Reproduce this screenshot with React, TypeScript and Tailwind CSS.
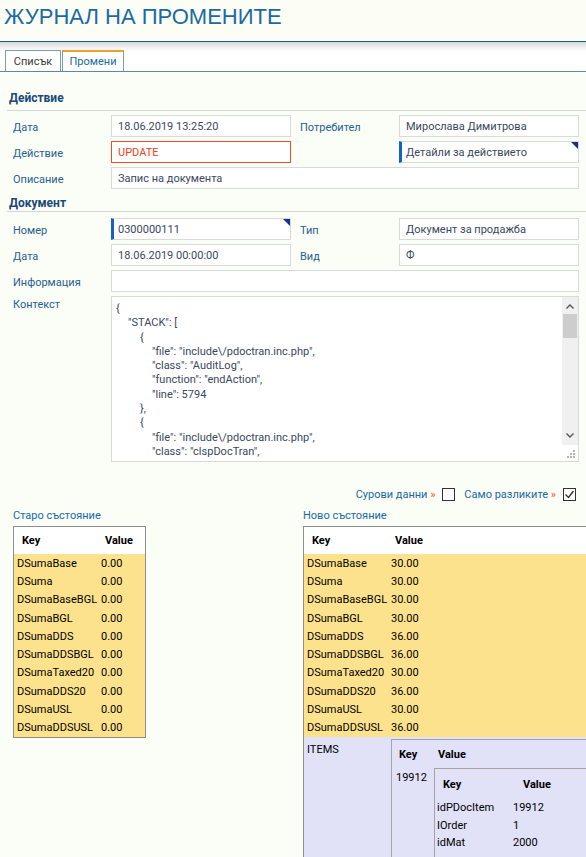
import React from "react";

const oldRows: [string, string][] = [
  ["DSumaBase", "0.00"],
  ["DSuma", "0.00"],
  ["DSumaBaseBGL", "0.00"],
  ["DSumaBGL", "0.00"],
  ["DSumaDDS", "0.00"],
  ["DSumaDDSBGL", "0.00"],
  ["DSumaTaxed20", "0.00"],
  ["DSumaDDS20", "0.00"],
  ["DSumaUSL", "0.00"],
  ["DSumaDDSUSL", "0.00"],
];

const newRows: [string, string][] = [
  ["DSumaBase", "30.00"],
  ["DSuma", "30.00"],
  ["DSumaBaseBGL", "30.00"],
  ["DSumaBGL", "30.00"],
  ["DSumaDDS", "36.00"],
  ["DSumaDDSBGL", "36.00"],
  ["DSumaTaxed20", "30.00"],
  ["DSumaDDS20", "36.00"],
  ["DSumaUSL", "30.00"],
  ["DSumaDDSUSL", "36.00"],
];

const itemRows: [string, string][] = [
  ["idPDocItem", "19912"],
  ["IOrder", "1"],
  ["idMat", "2000"],
];

const indent = ["pl-0", "pl-[12px]", "pl-[24px]", "pl-[36px]"];

const contextLines: [number, string][] = [
  [0, "{"],
  [1, '"STACK": ['],
  [2, "{"],
  [3, '"file": "include\\/pdoctran.inc.php",'],
  [3, '"class": "AuditLog",'],
  [3, '"function": "endAction",'],
  [3, '"line": 5794'],
  [2, "},"],
  [2, "{"],
  [3, '"file": "include\\/pdoctran.inc.php",'],
  [3, '"class": "clspDocTran",'],
];

function Label({ children, right }: { children: React.ReactNode; right?: boolean }) {
  return (
    <div className={`flex items-center pt-[3px] text-[#285f91] ${right ? "pl-[9px]" : "pl-[6px]"}`}>
      {children}
    </div>
  );
}

function Field({ children, className = "" }: { children?: React.ReactNode; className?: string }) {
  return (
    <div
      className={`flex items-center border border-[#d9d9d9] bg-white pl-[6px] pt-[2px] text-[#3a4860] ${className}`}
    >
      {children}
    </div>
  );
}

function LinkField({ children }: { children: React.ReactNode }) {
  return (
    <div className="relative flex items-center border border-[#d9d9d9] border-l-[3px] border-l-[#1561c6] bg-white pl-[4px] pt-[2px] text-[#3a4860]">
      {children}
      <span className="absolute right-0 top-0 h-0 w-0 border-l-[7px] border-t-[7px] border-l-transparent border-t-[#1b2c98]" />
    </div>
  );
}

function Chevron({ up }: { up?: boolean }) {
  return (
    <svg width="8" height="5" viewBox="0 0 8 5">
      <path
        d={up ? "M0.5 4.5 L4 1 L7.5 4.5" : "M0.5 0.5 L4 4 L7.5 0.5"}
        fill="none"
        stroke="#555"
        strokeWidth="1.4"
      />
    </svg>
  );
}

function Checkbox({ checked }: { checked?: boolean }) {
  return (
    <span className="ml-[7px] flex h-[13px] w-[13px] items-center justify-center border border-[#333] bg-white">
      {checked && (
        <svg width="11" height="11" viewBox="0 0 11 11">
          <path d="M1.5 5.5 L4.5 8.5 L9.5 2" fill="none" stroke="#333" strokeWidth="1.4" />
        </svg>
      )}
    </span>
  );
}

export default function App() {
  return (
    <div className="min-h-[857px] w-[586px] overflow-hidden bg-[#fbfdf7] text-[11px] leading-[14px] text-black [font-family:Roboto,sans-serif]">
      {/* title */}
      <div className="h-[42px] border-b border-[#1b5d8d] bg-[#fcfdf5] pl-[4px] pt-[4px]">
        <h1 className="text-[22px] leading-[26px] text-[#1a6aa2] [font-family:'Liberation_Sans',Arial,sans-serif]">
          ЖУРНАЛ НА ПРОМЕНИТЕ
        </h1>
      </div>

      {/* tabs */}
      <div className="flex h-[30px] items-end border-b border-[#5b8c9c] bg-[linear-gradient(#d6d8d8,#ffffff_9px)] pl-[5px]">
        <div className="flex h-[21px] w-[56px] items-center justify-center border border-b-0 border-[#7d9faa] bg-white pt-[2px] text-[#3a3a3a]">
          Списък
        </div>
        <div className="ml-[1px] flex h-[21px] w-[62px] items-center justify-center border border-b-0 border-t-[2px] border-[#7d9faa] border-t-[#f3a024] bg-white pt-[1px] text-[#1a6aa5]">
          Промени
        </div>
      </div>

      {/* Действие */}
      <div className="ml-[7px] flex h-[39px] items-end border-b border-[#d6d6d6] pb-[4px] pl-[2px] text-[12px] font-bold leading-[15px] text-[#1c4a74]">
        Действие
      </div>
      <div className="ml-[7px] mt-[4px] grid grid-cols-[104px_180px_108px_180px] grid-rows-[22px_22px_22px] gap-y-[4px]">
        <Label>Дата</Label>
        <Field>18.06.2019 13:25:20</Field>
        <Label right>Потребител</Label>
        <Field>Мирослава Димитрова</Field>

        <Label>Действие</Label>
        <Field className="border-[#f04b23] text-[#f0401a]">UPDATE</Field>
        <div />
        <LinkField>Детайли за действието</LinkField>

        <Label>Описание</Label>
        <Field className="col-span-3">Запис на документа</Field>
      </div>

      {/* Документ */}
      <div className="ml-[7px] flex h-[23px] items-end border-b border-[#d6d6d6] pb-0 pl-[2px] text-[12px] font-bold leading-[15px] text-[#1c4a74]">
        Документ
      </div>
      <div className="ml-[7px] mt-[6px] grid grid-cols-[104px_180px_108px_180px] grid-rows-[22px_22px_22px_166px] gap-y-[4px]">
        <Label>Номер</Label>
        <LinkField>0300000111</LinkField>
        <Label right>Тип</Label>
        <Field>Документ за продажба</Field>

        <Label>Дата</Label>
        <Field>18.06.2019 00:00:00</Field>
        <Label right>Вид</Label>
        <Field>Ф</Field>

        <Label>Информация</Label>
        <Field className="col-span-3" />

        <div className="pl-[6px] pt-[2px] text-[#285f91]">Контекст</div>
        <div className="relative col-span-3 overflow-hidden border border-[#d9d9d9] bg-white">
          <div className="pl-[4px] pt-[5px] leading-[14.3px] text-[#3a4860]">
            {contextLines.map(([lvl, t], i) => (
              <div key={i} className={`whitespace-pre ${indent[lvl]}`}>
                {t}
              </div>
            ))}
          </div>
          <div className="absolute right-0 top-0 flex h-[148px] w-[16px] flex-col items-center bg-[#f0f0f0]">
            <div className="mt-[7px]">
              <Chevron up />
            </div>
            <div className="mt-[5px] h-[24px] w-[14px] bg-[#cdcdcd]" />
            <div className="mt-auto mb-[7px]">
              <Chevron />
            </div>
          </div>
          <svg className="absolute bottom-[2px] right-[2px]" width="10" height="10" viewBox="0 0 10 10">
            <g fill="#b5b5b5">
              <rect x="7" y="1" width="2" height="2" />
              <rect x="4" y="4" width="2" height="2" />
              <rect x="7" y="4" width="2" height="2" />
              <rect x="1" y="7" width="2" height="2" />
              <rect x="4" y="7" width="2" height="2" />
              <rect x="7" y="7" width="2" height="2" />
            </g>
          </svg>
        </div>
      </div>

      {/* filters */}
      <div className="mt-[26px] flex h-[13px] items-center justify-end pr-[10px] text-[#1a6aa5]">
        <span className="pt-[1px]">
          Сурови данни <span className="text-[#f0602a]">»</span>
        </span>
        <Checkbox />
        <span className="ml-[9px] pt-[1px]">
          Само разликите <span className="text-[#f0602a]">»</span>
        </span>
        <Checkbox checked />
      </div>

      {/* states */}
      <div className="mt-[8px] flex">
        <div className="w-[303px] shrink-0 pl-[13px]">
          <div className="text-[#1a6aa5]">Старо състояние</div>
          <div className="mt-[3px] w-[133px] border border-[#8e8e8e]">
            <div className="flex h-[27px] items-center bg-white pt-[1px] font-bold">
              <div className="w-[83px] pl-[8px]">Key</div>
              <div className="pl-[8px]">Value</div>
            </div>
            {oldRows.map(([k, v]) => (
              <div key={k} className="flex h-[18.3px] items-center bg-[#fde28d] pt-[1px]">
                <div className="w-[83px] pl-[3px]">{k}</div>
                <div className="pl-[4px]">{v}</div>
              </div>
            ))}
          </div>
        </div>

        <div className="w-[283px] shrink-0">
          <div className="text-[#1a6aa5]">Ново състояние</div>
          <div className="mt-[3px] w-[330px] border-l border-t border-[#8e8e8e]">
            <div className="flex h-[27px] items-center bg-white pt-[1px] font-bold">
              <div className="w-[83px] pl-[8px]">Key</div>
              <div className="pl-[8px]">Value</div>
            </div>
            {newRows.map(([k, v]) => (
              <div key={k} className="flex h-[18.3px] items-center bg-[#fde28d] pt-[1px]">
                <div className="w-[83px] pl-[3px]">{k}</div>
                <div className="pl-[4px]">{v}</div>
              </div>
            ))}
            <div className="flex min-h-[130px] bg-[#e1e1f7]">
              <div className="w-[83px] pl-[3px] pt-[6px]">ITEMS</div>
              <div className="flex-1 pl-[4px] pt-[2px]">
                <div className="border-l border-t border-[#a3a3a3]">
                  <div className="flex h-[28px] items-center pt-[2px] font-bold">
                    <div className="w-[42px] pl-[7px]">Key</div>
                    <div className="pl-[4px]">Value</div>
                  </div>
                  <div className="flex">
                    <div className="w-[42px] pl-[4px] pt-[3px]">19912</div>
                    <div className="flex-1 border-l border-t border-[#a3a3a3]">
                      <div className="flex h-[30px] items-center pt-[2px] font-bold">
                        <div className="w-[77px] pl-[8px]">Key</div>
                        <div className="pl-[11px]">Value</div>
                      </div>
                      {itemRows.map(([k, v]) => (
                        <div key={k} className="flex h-[17.7px] items-center">
                          <div className="w-[77px] pl-[2px]">{k}</div>
                          <div className="pl-[1px]">{v}</div>
                        </div>
                      ))}
                      <div className="h-[10px]" />
                    </div>
                  </div>
                </div>
              </div>
            </div>
          </div>
        </div>
      </div>
    </div>
  );
}
